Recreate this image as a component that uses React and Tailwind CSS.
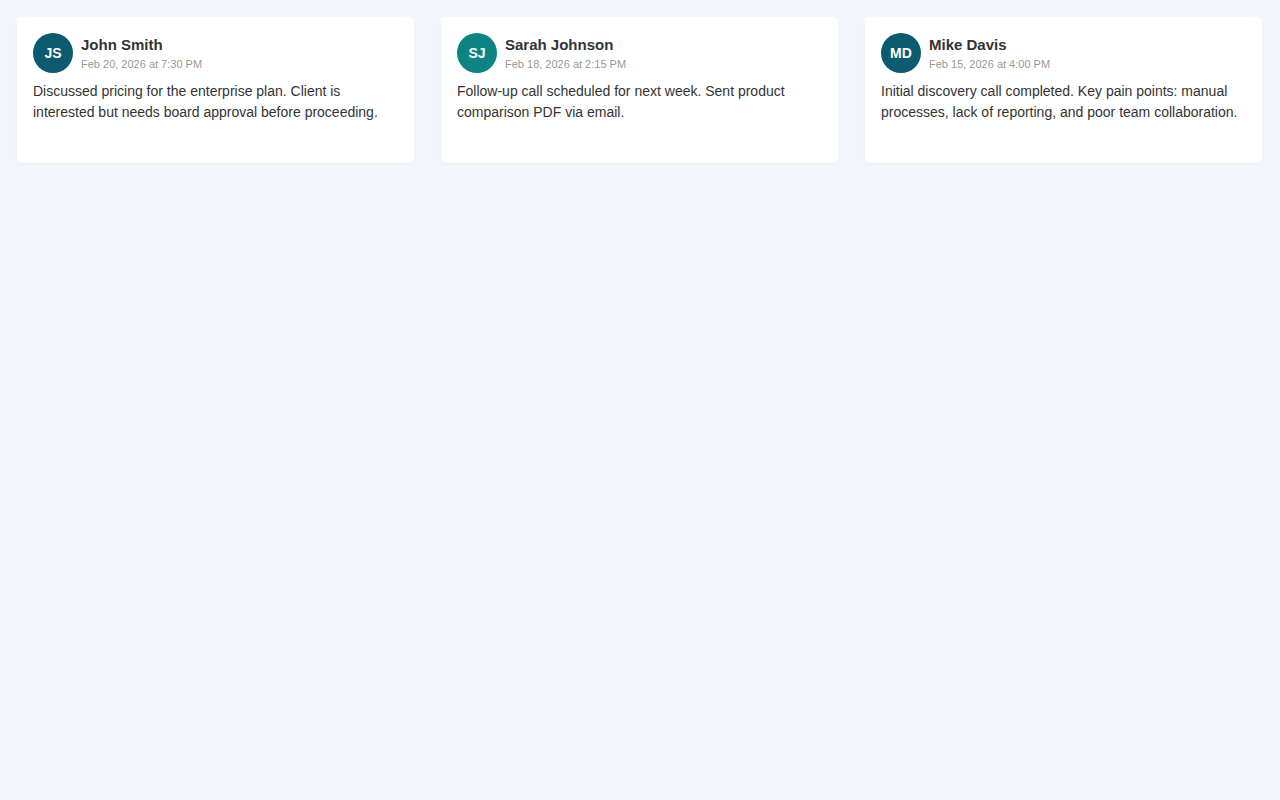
import React from 'react';

const notes = [
  {
    id: 1,
    initials: 'JS',
    name: 'John Smith',
    date: 'Feb 20, 2026 at 7:30 PM',
    color: 'bg-[#0b5a6e]',
    text: 'Discussed pricing for the enterprise plan. Client is interested but needs board approval before proceeding.',
  },
  {
    id: 2,
    initials: 'SJ',
    name: 'Sarah Johnson',
    date: 'Feb 18, 2026 at 2:15 PM',
    color: 'bg-[#0e8383]',
    text: 'Follow-up call scheduled for next week. Sent product comparison PDF via email.',
  },
  {
    id: 3,
    initials: 'MD',
    name: 'Mike Davis',
    date: 'Feb 15, 2026 at 4:00 PM',
    color: 'bg-[#0b5a6e]',
    text: 'Initial discovery call completed. Key pain points: manual processes, lack of reporting, and poor team collaboration.',
  },
];

function NoteCard({ note }) {
  return (
    <div className="bg-white rounded-[5px] shadow-[0_1px_3px_rgba(30,60,120,0.06)] p-4 h-[146px]">
      <div className="flex items-start gap-2 mb-[8px]">
        <div
          className={`${note.color} w-10 h-10 rounded-full flex items-center justify-center text-white text-[14px] font-bold shrink-0`}
        >
          {note.initials}
        </div>
        <div className="pt-[3px]">
          <div className="text-[15px] leading-[18px] font-bold text-[#333]">{note.name}</div>
          <div className="text-[11px] leading-[14px] mt-[3px] text-[#999]">{note.date}</div>
        </div>
      </div>
      <p className="text-[14px] leading-[21px] text-[#333]">{note.text}</p>
    </div>
  );
}

export default function App() {
  return (
    <div className="min-h-screen bg-[#f3f7fd] font-['Liberation_Sans',Arial,sans-serif]">
      <div className="grid grid-cols-3 gap-[27px] pt-[17px] pl-[17px] pr-[18px]">
        {notes.map((note) => (
          <NoteCard key={note.id} note={note} />
        ))}
      </div>
    </div>
  );
}
